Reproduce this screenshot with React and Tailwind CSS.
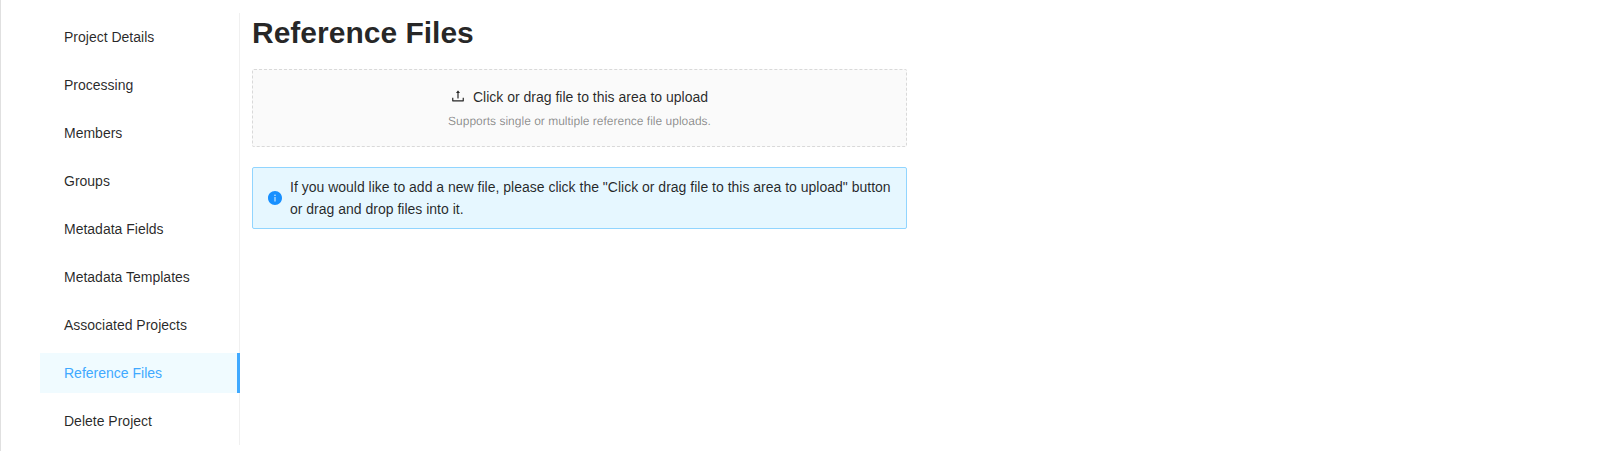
import { AiFillInfoCircle, AiOutlineUpload } from "react-icons/ai";

// Trims the built-in margin of the icon set so glyphs fill their box.
const TIGHT = "64 64 896 896";

const items = [
  "Project Details",
  "Processing",
  "Members",
  "Groups",
  "Metadata Fields",
  "Metadata Templates",
  "Associated Projects",
  "Reference Files",
  "Delete Project",
];

function SideMenu({ active }) {
  return (
    <nav className="h-[432px] w-[200px] shrink-0 border-r border-[#f0f0f0]">
      <ul className="-mr-px">
        {items.map((item) => (
          <li key={item} className="py-1">
            <a
              className={
                item === active
                  ? "block h-10 border-r-3 border-[#40a9ff] bg-[#f0fbff] pl-6 leading-10 text-[#40a9ff]"
                  : "block h-10 pl-6 leading-10"
              }
            >
              {item}
            </a>
          </li>
        ))}
      </ul>
    </nav>
  );
}

function UploadArea() {
  return (
    <div className="mt-4 flex h-[78px] flex-col items-center rounded-xs border border-dashed border-[#d9d9d9] bg-[#fafafa] pt-4">
      <p className="flex items-center gap-2 leading-[22px]">
        <AiOutlineUpload viewBox={TIGHT} className="-mt-0.5 size-3.5" />
        Click or drag file to this area to upload
      </p>
      <p className="mt-0.5 text-xs leading-[22px] text-black/45 [text-rendering:geometricPrecision]">
        Supports single or multiple reference file uploads.
      </p>
    </div>
  );
}

function InfoAlert() {
  return (
    <div className="mt-5 flex items-center gap-2 rounded-xs border border-[#91d5ff] bg-[#e6f7ff] py-2 pr-3 pl-[15px] leading-[22px]">
      <AiFillInfoCircle viewBox={TIGHT} className="size-3.5 shrink-0 text-[#1890ff]" />
      <p>
        If you would like to add a new file, please click the "Click or drag file to this area to
        upload" button or drag and drop files into it.
      </p>
    </div>
  );
}

export default function App() {
  return (
    <div className="flex h-screen overflow-hidden border-l border-[#e0e0e0] bg-white pt-[13px] pl-[39px] font-['Liberation_Sans',Arial,sans-serif] text-sm text-black/85">
      <SideMenu active="Reference Files" />
      <main className="ml-3 w-[655px]">
        <h1 className="text-[30px] leading-10 font-semibold">Reference Files</h1>
        <UploadArea />
        <InfoAlert />
      </main>
    </div>
  );
}
